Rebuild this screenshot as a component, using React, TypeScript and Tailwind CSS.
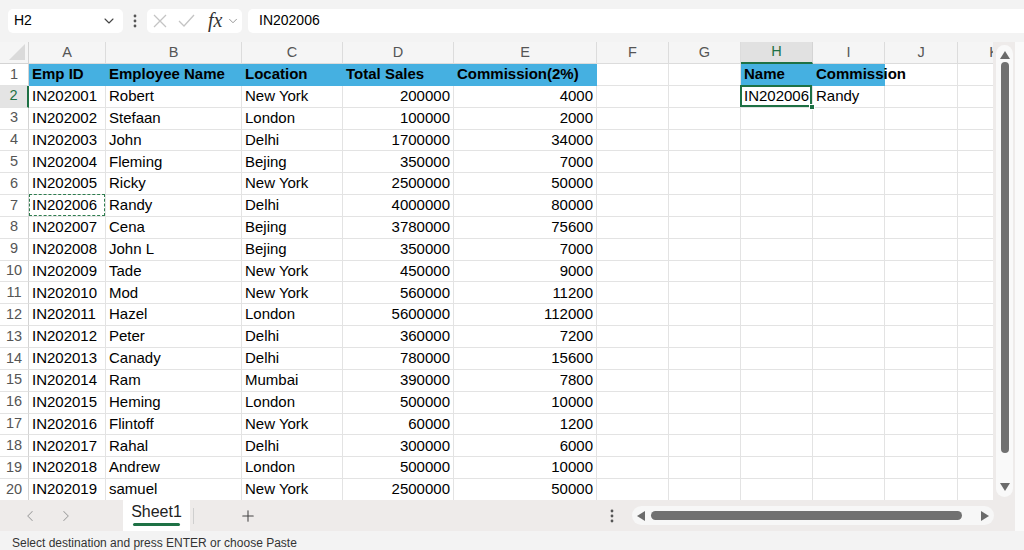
import { ChevronDown, ChevronLeft, ChevronRight, Plus } from 'lucide-react';

type Row = [string, string, string, string, string];

const rows: Row[] = [
  ['IN202001', 'Robert', 'New York', '200000', '4000'],
  ['IN202002', 'Stefaan', 'London', '100000', '2000'],
  ['IN202003', 'John', 'Delhi', '1700000', '34000'],
  ['IN202004', 'Fleming', 'Bejing', '350000', '7000'],
  ['IN202005', 'Ricky', 'New York', '2500000', '50000'],
  ['IN202006', 'Randy', 'Delhi', '4000000', '80000'],
  ['IN202007', 'Cena', 'Bejing', '3780000', '75600'],
  ['IN202008', 'John L', 'Bejing', '350000', '7000'],
  ['IN202009', 'Tade', 'New York', '450000', '9000'],
  ['IN202010', 'Mod', 'New York', '560000', '11200'],
  ['IN202011', 'Hazel', 'London', '5600000', '112000'],
  ['IN202012', 'Peter', 'Delhi', '360000', '7200'],
  ['IN202013', 'Canady', 'Delhi', '780000', '15600'],
  ['IN202014', 'Ram', 'Mumbai', '390000', '7800'],
  ['IN202015', 'Heming', 'London', '500000', '10000'],
  ['IN202016', 'Flintoff', 'New York', '60000', '1200'],
  ['IN202017', 'Rahal', 'Delhi', '300000', '6000'],
  ['IN202018', 'Andrew', 'London', '500000', '10000'],
  ['IN202019', 'samuel', 'New York', '2500000', '50000'],
];

const letters = ['A', 'B', 'C', 'D', 'E', 'F', 'G', 'H', 'I', 'J', 'K'];

function Dots() {
  return (
    <svg width="6" height="16" viewBox="0 0 6 16">
      <circle cx="3" cy="3" r="1.4" fill="#555" />
      <circle cx="3" cy="8" r="1.4" fill="#555" />
      <circle cx="3" cy="13" r="1.4" fill="#555" />
    </svg>
  );
}

function Cell({ children, className = '' }: { children?: React.ReactNode; className?: string }) {
  return (
    <div className={`h-[21.85px] border-r border-b border-[#e3e3e3] flex items-center px-[3px] whitespace-nowrap ${className}`}>
      {children}
    </div>
  );
}

function BlueCell({ children, className = '' }: { children?: React.ReactNode; className?: string }) {
  return (
    <div className={`h-[21.85px] bg-[#45b0e1] border-b border-[#45b0e1] flex items-center px-[3px] font-bold whitespace-nowrap ${className}`}>
      {children}
    </div>
  );
}

function RowHead({ n, active = false }: { n: number; active?: boolean }) {
  return (
    <div className={`h-[21.85px] border-b border-[#e3e3e3] flex items-center justify-center text-[14.5px] ${active ? 'text-[#1e7145] border-r-2 border-r-[#1e7145] bg-[#e4e4e4]' : 'text-[#555] border-r border-r-[#d4d4d4]'}`}>
      {n}
    </div>
  );
}

export default function App() {
  return (
    <div className="w-[1024px] h-[550px] flex flex-col bg-[#f3f3f3] overflow-hidden text-black" style={{ fontFamily: '"Liberation Sans", Arial, sans-serif' }}>
      {/* formula bar */}
      <div className="h-[42px] flex items-center pl-[8px] gap-[6px] shrink-0 pb-[1px]">
        <div className="w-[115px] h-[24px] bg-white rounded-[5px] flex items-center justify-between pl-[6px] pr-[6px] text-[14px]">
          <span>H2</span>
          <ChevronDown size={16} strokeWidth={1.6} className="text-[#444]" />
        </div>
        <div className="w-[12px] flex justify-center"><Dots /></div>
        <div className="w-[95px] h-[24px] bg-white rounded-[5px] flex items-center pl-[6px]">
          <svg width="14" height="14" viewBox="0 0 14 14">
            <path d="M1 1 L13 13 M13 1 L1 13" stroke="#c4c4c4" strokeWidth="1.3" fill="none" />
          </svg>
          <svg width="17" height="13" viewBox="0 0 17 13" className="ml-[11px]">
            <path d="M1 7 L6 12 L16 1" stroke="#c4c4c4" strokeWidth="1.3" fill="none" />
          </svg>
          <span className="text-[20px] italic text-[#333] leading-none ml-[13px] -mt-[2px]" style={{ fontFamily: '"Liberation Serif", serif' }}>fx</span>
          <ChevronDown size={14} strokeWidth={1.3} className="text-[#777] ml-[4px]" />
        </div>
        <div className="flex-1 h-[24px] bg-white rounded-l-[5px] flex items-center pl-[11px] text-[14px]">IN202006</div>
      </div>

      {/* sheet + vertical scroll */}
      <div className="flex h-[458px] shrink-0">
        <div className="w-[993px] overflow-hidden bg-white">
          <div className="grid grid-cols-[29px_77px_136px_101px_111px_143px_72px_72px_72px_72px_73px_73px] text-[15px]">
            {/* header row */}
            <div className="h-[22px] bg-[#f5f5f5] border-r border-b border-[#d4d4d4] relative">
              <svg className="absolute right-[3px] bottom-[3px]" width="16" height="16" viewBox="0 0 16 16">
                <polygon points="16,0 16,16 0,16" fill="#dadada" />
              </svg>
            </div>
            {letters.map(l => (
              <div key={l} className={`h-[22px] flex items-center justify-center text-[14.5px] border-r ${l === 'H' ? 'bg-[#e1e1e1] text-[#1e7145] border-b-2 border-b-[#1e7145] border-r-[#d4d4d4]' : 'bg-[#f5f5f5] text-[#555] border-b border-[#dcdcdc]'}`}>
                {l}
              </div>
            ))}

            {/* row 1 */}
            <RowHead n={1} />
            <BlueCell>Emp ID</BlueCell>
            <BlueCell>Employee Name</BlueCell>
            <BlueCell>Location</BlueCell>
            <BlueCell>Total Sales</BlueCell>
            <BlueCell>Commission(2%)</BlueCell>
            <Cell />
            <Cell />
            <BlueCell>Name</BlueCell>
            <BlueCell className="relative z-10 overflow-visible">Commission</BlueCell>
            <Cell />
            <Cell />

            {rows.map((r, i) => {
              const n = i + 2;
              return (
                <div key={n} className="contents">
                  <RowHead n={n} active={n === 2} />
                  <Cell className={n === 7 ? 'relative' : ''}>
                    {r[0]}
                    {n === 7 && <div className="absolute inset-[0px] -top-[1px] border-[1.5px] border-dashed border-[#2e7d4f]" />}
                  </Cell>
                  <Cell>{r[1]}</Cell>
                  <Cell>{r[2]}</Cell>
                  <Cell className="justify-end">{r[3]}</Cell>
                  <Cell className="justify-end">{r[4]}</Cell>
                  <Cell />
                  <Cell />
                  <Cell className={n === 2 ? 'relative' : ''}>
                    {n === 2 && 'IN202006'}
                    {n === 2 && (
                      <>
                        <div className="absolute -left-[1px] -top-[1px] right-0 bottom-0 border-2 border-[#1e7145]" />
                        <div className="absolute -right-[3px] -bottom-[3px] w-[6px] h-[6px] bg-[#1e7145] border border-white" />
                      </>
                    )}
                  </Cell>
                  <Cell>{n === 2 ? 'Randy' : ''}</Cell>
                  <Cell />
                  <Cell />
                </div>
              );
            })}
          </div>
        </div>
        <div className="w-[22px] bg-[#eeebea] pl-[3px] pt-[3px] pb-[3px]">
          <div className="w-[17px] h-full bg-[#f9f9f9] rounded-full flex flex-col items-center py-[6px]">
            <svg width="10" height="8" viewBox="0 0 10 8"><polygon points="5,0 10,8 0,8" fill="#6b6b6b" /></svg>
            <div className="w-[8px] h-[391px] bg-[#707070] rounded-full mt-[3px]" />
            <div className="flex-1" />
            <svg width="10" height="8" viewBox="0 0 10 8"><polygon points="0,0 10,0 5,8" fill="#6b6b6b" /></svg>
          </div>
        </div>
        <div className="flex-1 bg-[#fafafa]" />
      </div>

      {/* sheet tabs */}
      <div className="h-[31px] flex shrink-0">
        <div className="w-[1015px] bg-[#eeebea] flex items-center">
          <ChevronLeft size={18} strokeWidth={1.4} className="text-[#a0a0a0] ml-[21px]" />
          <ChevronRight size={18} strokeWidth={1.4} className="text-[#a0a0a0] ml-[18px]" />
          <div className="ml-[48px] w-[67px] h-[36px] -mt-[5px] bg-white rounded-t-[6px] flex flex-col items-center justify-center">
            <span className="text-[16px] text-[#222] leading-[18px] mt-[3px]">Sheet1</span>
            <div className="w-[47px] h-[2.5px] bg-[#1e7145] rounded-full mt-[2px]" />
          </div>
          <div className="w-[1px] h-[16px] bg-[#cfcfcf] ml-[3px]" />
          <Plus size={18} strokeWidth={1.4} className="text-[#444] ml-[45px]" />
          <div className="ml-[352px]"><Dots /></div>
          <div className="ml-[17px] w-[362px] h-[19px] bg-[#f7f7f7] rounded-full flex items-center px-[5px]">
            <svg width="8" height="10" viewBox="0 0 8 10"><polygon points="8,0 8,10 0,5" fill="#6b6b6b" /></svg>
            <div className="ml-[6px] w-[311px] h-[9px] bg-[#717171] rounded-full" />
            <div className="flex-1" />
            <svg width="8" height="10" viewBox="0 0 8 10"><polygon points="0,0 8,5 0,10" fill="#6b6b6b" /></svg>
          </div>
        </div>
        <div className="flex-1 bg-[#fafafa]" />
      </div>

      {/* status bar */}
      <div className="flex-1 flex items-center pl-[12px] pt-[3px] text-[12px] text-[#333] bg-[#f3f3f3]">
        Select destination and press ENTER or choose Paste
      </div>
    </div>
  );
}
